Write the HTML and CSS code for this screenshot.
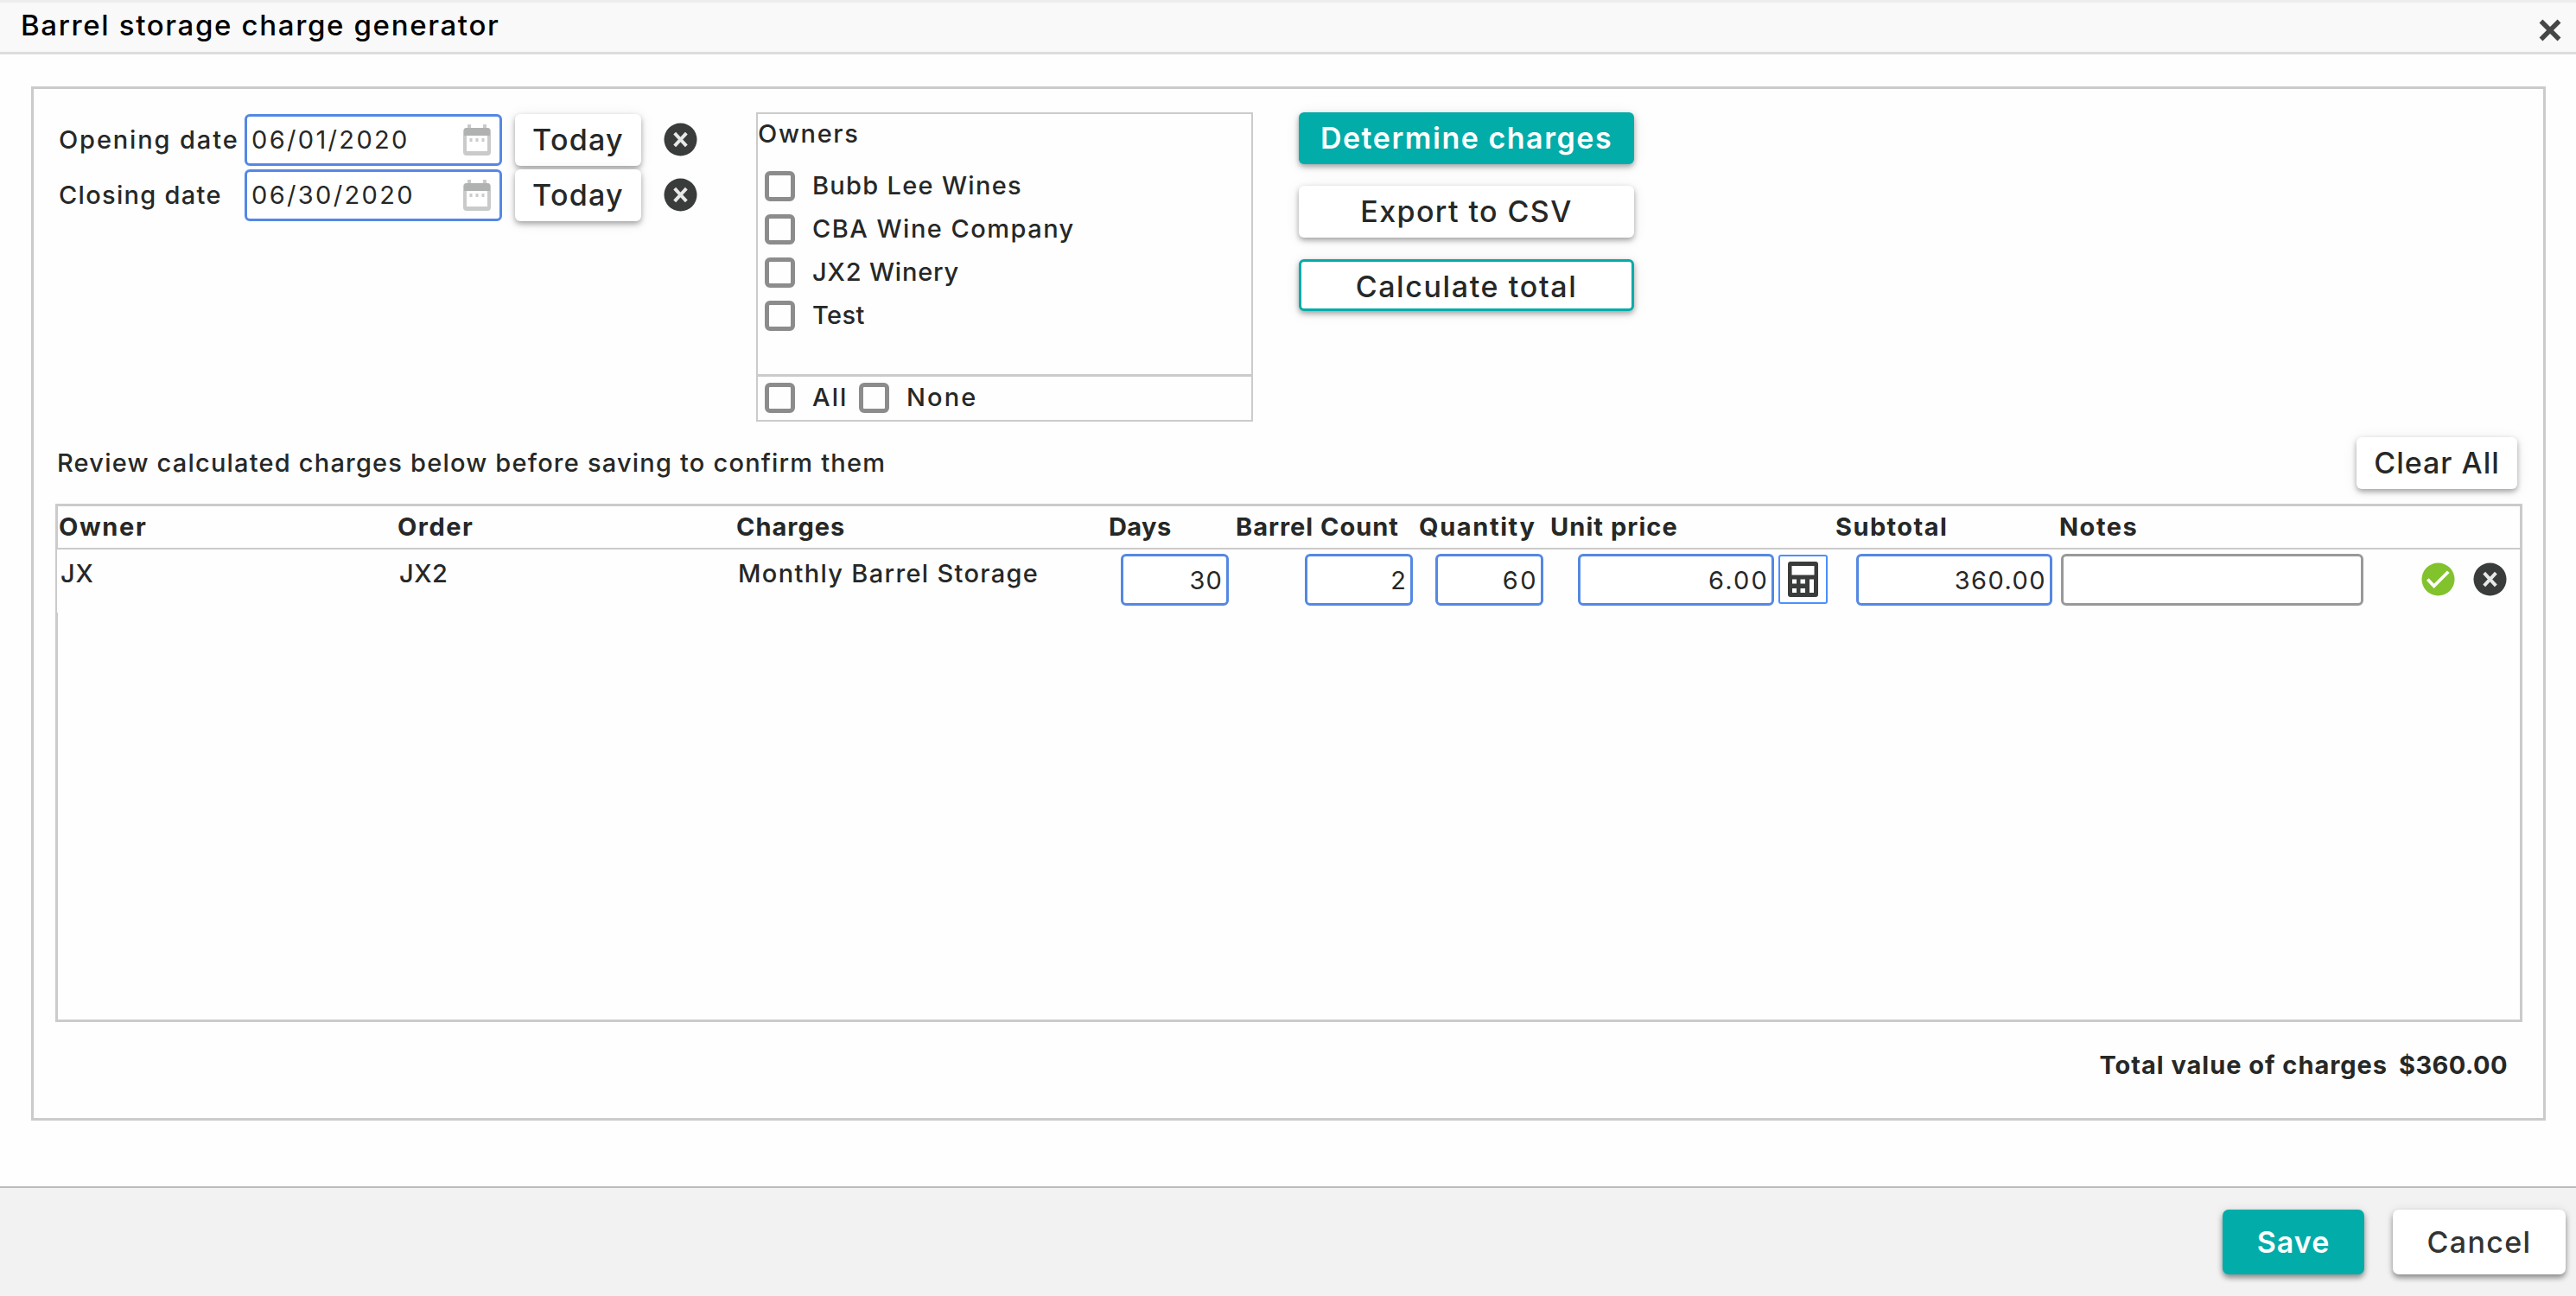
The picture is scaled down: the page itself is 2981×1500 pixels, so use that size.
FILE: index.html
```html
<!DOCTYPE html>
<html lang="en">
<head>
<meta charset="utf-8">
<title>Barrel storage charge generator</title>
<link rel="stylesheet" href="styles.css">
</head>
<body>
<svg class="sprite" aria-hidden="true">
  <symbol id="i-remove" viewBox="0 0 40 40"><circle cx="20" cy="20" r="19.5" fill="#3a3c3b"/><path d="M13 12.500 27 27.500M27 12.500 13 27.500" stroke="#e8e8e8" stroke-width="4" fill="none"/></symbol>
  <symbol id="i-check" viewBox="0 0 40 40"><circle cx="20" cy="20" r="19.5" fill="#82c22c"/><path d="M7.500 20 15 28 32 11" stroke="#fff" stroke-width="3.800" fill="none"/></symbol>
  <symbol id="i-calendar" viewBox="0 0 32 36"><path d="M5 0h4v4h14V0h4v4h1a4 4 0 0 1 4 4v24a4 4 0 0 1-4 4H4a4 4 0 0 1-4-4V8a4 4 0 0 1 4-4h1z" fill="#c9cbca"/><path d="M1 7a3 3 0 0 1 3-3h24a3 3 0 0 1 3 3v6H1z" fill="#b0b2b1"/><path d="M4 13h24v18H4z" fill="#fff"/><path d="M7.500 16h3v4h-3zM14.500 16h3v4h-3zM21.500 16h3v4h-3z" fill="#ccc"/></symbol>
  <symbol id="i-calc" viewBox="0 0 35 41"><path fill="#3a3c3b" fill-rule="evenodd" d="M3 0h29a3 3 0 0 1 3 3v35a3 3 0 0 1-3 3H3a3 3 0 0 1-3-3V3a3 3 0 0 1 3-3zM4.500 5h26v10.500h-26zM5 20.500h5v5H5zM14.500 20.500h5.500v5h-5.500zM5 31h5v5H5zM14.500 31h5.500v5h-5.500zM25 20.500h5V36h-5z"/></symbol>
</svg>
<div class="dialog">
  <header class="titlebar">
    <h1 class="title">Barrel storage charge generator</h1>
    <svg class="close" viewBox="0 0 26 26"><path d="M2.500 2.500 23.500 23.500M23.500 2.500 2.500 23.500" stroke="#454746" stroke-width="5.500"/></svg>
  </header>
  <main class="panel">
    <section class="filters">
      <div class="dates">
        <div class="date-row">
          <label class="lbl-open">Opening date</label>
          <div class="date"><input class="field" value="06/01/2020"><svg class="cal"><use href="#i-calendar"/></svg></div>
          <button class="btn today">Today</button>
          <svg class="ico"><use href="#i-remove"/></svg>
        </div>
        <div class="date-row">
          <label class="lbl-close">Closing date</label>
          <div class="date"><input class="field" value="06/30/2020"><svg class="cal"><use href="#i-calendar"/></svg></div>
          <button class="btn today">Today</button>
          <svg class="ico"><use href="#i-remove"/></svg>
        </div>
      </div>
      <div class="owners">
        <div class="owners-title">Owners</div>
        <ul class="owner-list">
          <li class="opt"><i class="box"></i><span class="o-bubb">Bubb Lee Wines</span></li>
          <li class="opt"><i class="box"></i><span class="o-cba">CBA Wine Company</span></li>
          <li class="opt"><i class="box"></i><span class="o-jx">JX2 Winery</span></li>
          <li class="opt"><i class="box"></i><span class="o-test">Test</span></li>
        </ul>
        <div class="owners-foot">
          <div class="opt opt-all"><i class="box"></i><span class="o-all">All</span></div>
          <div class="opt"><i class="box"></i><span class="o-none">None</span></div>
        </div>
      </div>
      <div class="actions">
        <button class="btn primary b-det">Determine charges</button>
        <button class="btn b-exp">Export to CSV</button>
        <button class="btn outlined b-calc">Calculate total</button>
      </div>
    </section>
    <section class="review">
      <p class="hint">Review calculated charges below before saving to confirm them</p>
      <button class="btn clear">Clear All</button>
    </section>
    <section class="charges">
      <div class="grid head">
        <span class="h-owner">Owner</span><span class="h-order">Order</span><span class="h-charges">Charges</span><span class="h-days">Days</span><span class="h-barrel">Barrel Count</span><span class="h-qty">Quantity</span><span class="h-unit">Unit price</span><span class="h-sub">Subtotal</span><span class="h-notes">Notes</span>
      </div>
      <div class="grid row">
        <span class="txt c-jx">JX</span>
        <span class="txt c-jx2">JX2</span>
        <span class="txt c-mbs">Monthly Barrel Storage</span>
        <div class="c-days"><input class="field num" value="30"></div>
        <div class="c-barrel"><input class="field num" value="2"></div>
        <div class="c-qty"><input class="field num" value="60"></div>
        <div class="c-unit"><input class="field num wide" value="6.00"><button class="calc"><svg><use href="#i-calc"/></svg></button></div>
        <div class="c-sub"><input class="field num wide" value="360.00"></div>
        <div class="c-notes"><input class="field notes"></div>
        <div class="c-act"><svg class="ico"><use href="#i-check"/></svg><svg class="ico"><use href="#i-remove"/></svg></div>
      </div>
    </section>
    <div class="total"><span class="t-label">Total value of charges</span><span class="t-val">$360.00</span></div>
  </main>
  <footer class="footer">
    <button class="btn primary save">Save</button>
    <button class="btn cancel">Cancel</button>
  </footer>
</div>
</body>
</html>
```
FILE: styles.css
```css
* { box-sizing: border-box; margin: 0; padding: 0; }
body { font-family: Inter, "Noto Sans", sans-serif; font-size: 29px; font-weight: 500; color: #262827; background: #fefefe; }
button, input { font: inherit; color: inherit; }
ul { list-style: none; }
i { display: block; }
.sprite { position: absolute; width: 0; height: 0; }
.dialog { width: 2981px; height: 1500px; display: flex; flex-direction: column; overflow: hidden; white-space: nowrap; }

.titlebar { height: 63px; flex: none; display: flex; justify-content: space-between; padding: 0 17px 0 24px; background: #f9f9f9; border-top: 3px solid #ededed; border-bottom: 3px solid #ddd; }
.title { font-size: 33px; font-weight: 500; line-height: 53px; color: #000; letter-spacing: 1.65px; }
.close { width: 26px; height: 26px; margin-top: 19px; }

.panel { width: 2910px; height: 1197px; flex: none; margin: 37px 0 0 36px; padding: 27px 24px 0 25px; border: 3px solid #cbcbcb; }
.filters { height: 358px; display: grid; grid-template-columns: 808px 575px 388px; padding-left: 3px; }
.dates { display: flex; flex-direction: column; gap: 4px; padding-top: 2px; }
.date-row { display: flex; align-items: center; height: 60px; }
.date-row label { width: 216px; padding: 0 0 1px 1px; }
.lbl-open { letter-spacing: 1.87px; }
.lbl-close { letter-spacing: 1.3px; }
.date { position: relative; width: 298px; margin-right: 15px; }
.field { display: block; width: 100%; height: 60px; background: #fff; border: 3px solid #5488e3; border-radius: 6px; outline: 0; font-size: 29px; font-weight: 400; }
.date .field { padding: 0 0 1px 5px; letter-spacing: 2.35px; }
.cal { position: absolute; right: 13px; top: 12px; width: 32px; height: 36px; }
.ico { width: 39px; height: 39px; flex: none; }
.date-row .ico { margin-top: -1px; }

.btn { display: block; height: 60px; background: #fff; border: 0; border-radius: 6px; font-size: 34px; line-height: 58px; white-space: nowrap; box-shadow: 0 3px 6px rgba(0,0,0,.34), 0 2px 18px rgba(0,0,0,.07); }
.today { width: 146px; margin-right: 26px; letter-spacing: 1.28px; }
.primary { background: #02aca9; color: #fff; font-weight: 600; }
.outlined { border: 3px solid #02aca9; line-height: 55px; }
.b-det { letter-spacing: 1.53px; }
.b-exp { letter-spacing: 1.41px; }
.b-calc { letter-spacing: 1.62px; padding-top: 1px; }

.owners { display: flex; flex-direction: column; border: 2px solid #cbcbcb; }
.owners-title { height: 58px; line-height: 45px; letter-spacing: 1.65px; }
.owner-list { flex: 1; }
.opt { display: flex; align-items: center; height: 50px; padding-left: 8px; gap: 20px; }
.opt span { padding-bottom: 1px; }
.box { width: 35px; height: 35px; flex: none; border: 5px solid #8c8c8c; border-radius: 6px; }
.owners-foot { height: 53px; display: flex; border-top: 3px solid #cbcbcb; }
.owners-foot .opt { height: 48px; }
.opt-all { width: 109px; }
.o-bubb { letter-spacing: 1.3px; }
.o-cba { letter-spacing: 1.48px; }
.o-jx { letter-spacing: .82px; }
.o-test { letter-spacing: .39px; }
.o-all { letter-spacing: 2.1px; }
.o-none { letter-spacing: 2.1px; }
.actions { margin-left: 53px; width: 388px; display: flex; flex-direction: column; gap: 25px; }

.review { display: flex; justify-content: space-between; align-items: center; height: 60px; margin: 18px 6px 17px 2px; }
.hint { padding-bottom: 2px; letter-spacing: 1.2px; }
.clear { width: 186px; letter-spacing: 1px; line-height: 60px; }

.charges { height: 600px; border: 3px solid #cbcbcb; width: 2855px; }
.grid { display: grid; grid-template-columns: 392px 392px 431px 147px 212px 152px 330px 259px 420px 1fr; }
.head { height: 50px; padding-left: 1px; line-height: 48px; font-weight: 700; border-bottom: 2px solid #cbcbcb; }
.h-owner { letter-spacing: 1.67px; }
.h-order { letter-spacing: 1.5px; }
.h-charges { letter-spacing: .99px; }
.h-days { letter-spacing: .42px; }
.h-barrel { letter-spacing: .98px; }
.h-qty { letter-spacing: 1.61px; }
.h-unit { letter-spacing: 1.07px; }
.h-sub { letter-spacing: 1.42px; }
.h-notes { letter-spacing: 1.5px; }
.row { height: 73px; padding: 5px 0 0 1px; margin-left: -1px; background: #fefefe; }
.txt { line-height: 45px; padding-left: 3px; }
.c-jx { letter-spacing: .82px; }
.c-jx2 { letter-spacing: .5px; }
.c-mbs { letter-spacing: 1.33px; }
.num { width: 125px; text-align: right; padding: 1px 4px 0 0; letter-spacing: 1.1px; }
.wide { width: 227px; }
.notes { width: 350px; border-color: #999; }
.c-days { padding-left: 15px; }
.c-barrel { padding-left: 81px; }
.c-qty { padding-left: 20px; }
.c-qty .num { letter-spacing: 2.5px; padding-right: 3px; }
.c-unit { padding-left: 33px; display: flex; gap: 5px; }
.c-unit .num { letter-spacing: 2.2px; padding-right: 3px; }
.calc { width: 57px; height: 57px; margin-top: 1px; background: #fff; border: 2px solid #4a90ff; border-radius: 3px; display: flex; align-items: center; justify-content: center; }
.calc svg { width: 35px; height: 41px; }
.c-sub { padding-left: 25px; }
.c-sub .num { letter-spacing: 1.43px; }
.c-notes { padding-left: 3px; }
.c-act { display: flex; gap: 21px; padding-top: 10px; }

.total { display: flex; justify-content: flex-end; gap: 13px; padding: 31px 17px 0 0; line-height: 38px; font-weight: 700; }
.t-label { letter-spacing: .97px; }
.t-val { letter-spacing: .39px; }

.footer { margin-top: auto; height: 127px; display: flex; justify-content: flex-end; gap: 33px; padding: 25px 12px 0; background: #f2f2f2; border-top: 2px solid #bbb; }
.footer .btn { height: 75px; line-height: 73px; border-radius: 7px; box-shadow: 0 4px 6px rgba(0,0,0,.4), 0 0 12px rgba(0,0,0,.08); }
.footer .save { width: 164px; letter-spacing: 1.03px; }
.footer .cancel { width: 200px; color: #333; letter-spacing: 1.34px; }
```
